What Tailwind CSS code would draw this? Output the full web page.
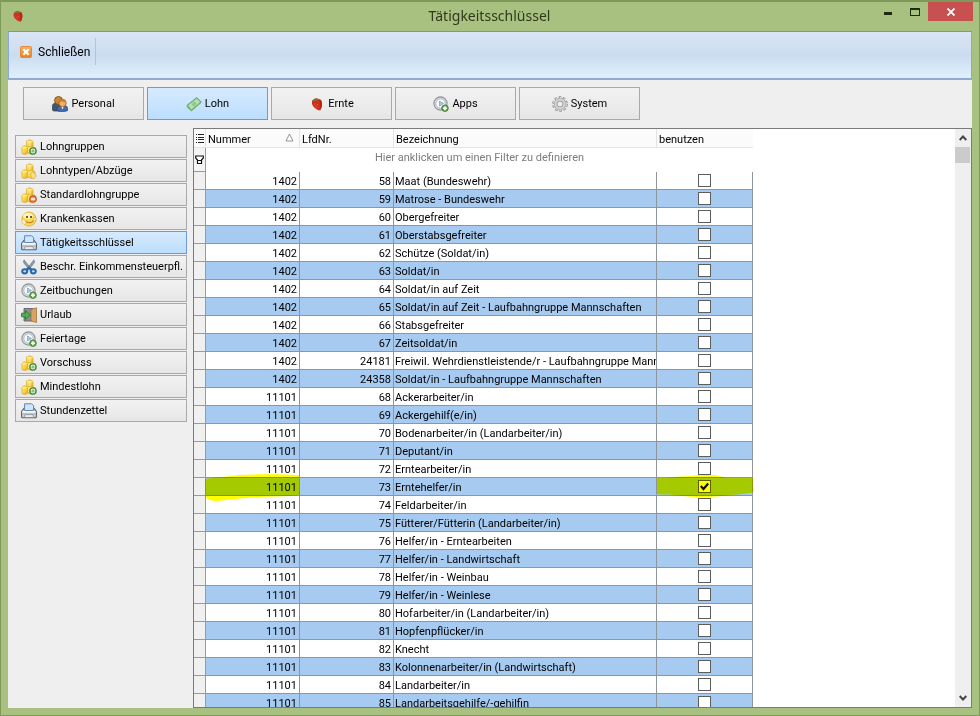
<!DOCTYPE html>
<html lang="de">
<head>
<meta charset="utf-8">
<meta name="viewport" content="width=device-width, initial-scale=1">
<title>Tätigkeitsschlüssel</title>
<script src="https://cdn.jsdelivr.net/npm/@tailwindcss/browser@4"></script>
</head>
<body class="h-screen overflow-hidden bg-[#a8c080] font-['Roboto',sans-serif] text-[11px] leading-4 text-black">

<svg class="absolute size-0" aria-hidden="true">
  <defs>
    <linearGradient id="gold" x1="0" y1="0" x2="1" y2="1"><stop offset="0" stop-color="#fff3a0"/><stop offset=".5" stop-color="#fbd548"/><stop offset="1" stop-color="#e5a91c"/></linearGradient>
    <linearGradient id="orange" x1="0" y1="0" x2="0" y2="1"><stop offset="0" stop-color="#f6b467"/><stop offset="1" stop-color="#ee7f1d"/></linearGradient>
    <symbol id="berry" viewBox="0 0 16 16">
      <path d="M3 5C5 3 9 2.500 12 4c1.700 3 1.200 7.500-1 10.500C7.500 14 4 11 3 8z" fill="#d02f1c"/>
      <path d="M11 14.500c2.200-3 2.700-7.500 1-10.500l-2-.5c1 3.500 1.200 7.500 1 11z" fill="#b02816"/>
      <path d="M3 5l1.500-1.800L7 2l2.500.8 2 .7-1.500 1-2-.2-1.500.8L5 5z" fill="#8a6a3c"/>
      <path d="M5 8h1M7 11h1M8 8.500h1M6 9.800h.8" stroke="#f08064" stroke-width=".6"/>
    </symbol>
    <symbol id="close-box" viewBox="0 0 12 12">
      <rect x=".5" y=".5" width="11" height="11" rx="1" fill="url(#orange)" stroke="#e38a3a"/>
      <path d="M3.300 3.300l5.400 5.400M8.700 3.300l-5.400 5.400" stroke="#fff" stroke-width="2.200"/>
    </symbol>
    <symbol id="people" viewBox="0 0 16 16">
      <path d="M.5 14V10c0-2 1.500-3 3.500-3h4v8H1.500z" fill="#44576f" stroke="#2b3a4c" stroke-width=".7"/>
      <circle cx="6.500" cy="4.500" r="4" fill="#c98930" stroke="#744615" stroke-width=".8"/>
      <path d="M5 14.500v-2c0-1.800 1.500-2.500 3-2.500h5c1.800 0 2.700.8 2.700 2.500v2c-2 1.400-8.700 1.400-10.700 0z" fill="#3f6cb3" stroke="#213f73" stroke-width=".7"/>
      <path d="M9 10l1.500 3.500L12 10z" fill="#fff"/>
      <circle cx="10.500" cy="7" r="3.700" fill="#f3b06c" stroke="#9b551c" stroke-width=".8"/>
      <path d="M7 6.500c.5-3.500 6-4 7 0-2-.2-3.600-.6-4.500-1.300-.4.800-1.400 1.200-2.500 1.300z" fill="#dd7a24"/>
    </symbol>
    <symbol id="money" viewBox="0 0 16 16">
      <path d="M.8 9.500L10.800 1.500l4.500 4.500L5.300 14.500z" fill="#8cc78b" stroke="#5f9f66" stroke-width=".9"/>
      <path d="M2.500 9.500l8.200-6.500 3 3-8.200 7z" fill="#b8e0b2"/>
      <ellipse cx="8.100" cy="8" rx="2.300" ry="1.800" transform="rotate(-38 8.100 8)" fill="#8cc98c"/>
      <path d="M.8 9.700l.2 1.800 4.300 4 10-8.500V6l-10 8.500z" fill="#7ab67c"/>
    </symbol>
    <symbol id="clock" viewBox="0 0 16 16">
      <circle cx="7.500" cy="7.500" r="6.600" fill="#dfe3e6" stroke="#8c9296" stroke-width="1.100"/>
      <circle cx="7.500" cy="7.500" r="4.700" fill="#fafcff" stroke="#9aa4ad" stroke-width=".8"/>
      <path d="M6.500 5v5l4-2.500z" fill="#a8c8e8" stroke="#668fb5" stroke-width=".6"/>
      <circle cx="12" cy="12.200" r="3.300" fill="#6aa84f" stroke="#3a7a28" stroke-width=".8"/>
      <path d="M12 10.200v4M10 12.200h4" stroke="#fff" stroke-width="1.500"/>
    </symbol>
    <symbol id="gear" viewBox="0 0 16 16">
      <circle cx="8" cy="8" r="6.500" fill="none" stroke="#8d8d8d" stroke-width="2.600" stroke-dasharray="2.500 1.580"/>
      <circle cx="8" cy="8" r="4.300" fill="none" stroke="#979797" stroke-width="3.600"/>
      <circle cx="8" cy="8" r="4.400" fill="none" stroke="#d2d2d2" stroke-width="2.200"/>
      <circle cx="8" cy="8" r="6.400" fill="none" stroke="#d2d2d2" stroke-width="1.600" stroke-dasharray="1.700 2.380" stroke-dashoffset="-.4"/>
    </symbol>
    <symbol id="coins" viewBox="0 0 16 16">
      <path d="M5.500 2l3-1.200L12 2v6H5.500z" fill="url(#gold)" stroke="#d8a82a" stroke-width=".7"/>
      <path d="M1 8l2.500-1.300L6.500 8v6.500L4 15.500l-3-1z" fill="url(#gold)" stroke="#d8a82a" stroke-width=".7"/>
      <path d="M6.500 8.500l3-1.200 4.500 1.200v5.500l-4 1.200-3.500-1.200z" fill="url(#gold)" stroke="#d8a82a" stroke-width=".7"/>
      <path d="M5.500 2L9 3.200 12 2M9 3.200V7M1 8l3 1.200L6.500 8" fill="none" stroke="#fff6b8" stroke-width=".8"/>
    </symbol>
    <symbol id="coins-plus" viewBox="0 0 16 16">
      <use href="#coins"/><circle cx="12" cy="12" r="3.100" fill="#fff" stroke="#3f8a35" stroke-width="1.400"/>
      <path d="M12 10.300v3.400M10.300 12h3.400" stroke="#7fb86c" stroke-width="1.300"/>
    </symbol>
    <symbol id="coins-hand" viewBox="0 0 16 16">
      <use href="#coins"/><path d="M9.500 11l2-2.200 2 1.500 1.700 2.700-1.700 2.300h-3z" fill="#fbe08a" stroke="#e0a93c" stroke-width=".8"/>
    </symbol>
    <symbol id="coins-minus" viewBox="0 0 16 16">
      <use href="#coins"/><circle cx="12" cy="12" r="3.200" fill="#f3a05a" stroke="#cf4d14" stroke-width="1.200"/>
      <path d="M10 12h4" stroke="#fff" stroke-width="1.600"/>
    </symbol>
    <symbol id="smiley" viewBox="0 0 16 16">
      <circle cx="8" cy="8" r="7" fill="#fbd955" stroke="#dba62c" stroke-width=".8"/>
      <ellipse cx="7" cy="4.800" rx="5" ry="3" fill="#fff3b5"/>
      <path d="M6 5v2M10 5v2" stroke="#3a2c10" stroke-width="1.500"/>
      <path d="M5 10.500c2 2 6 1.500 7.500-1" fill="none" stroke="#c18516" stroke-width="1.200"/>
      <path d="M.8 9.500c0-1.200 2-1.300 3 0l1.500 2-1.800 2c-1.700-.5-2.700-2-2.700-4zM13 6l2.200 1.500-.8 2.500-2-1z" fill="#fff6cf" stroke="#dba62c" stroke-width=".6"/>
    </symbol>
    <symbol id="printer" viewBox="0 0 16 16">
      <path d="M.6 8.500L3 5.300h10l2.400 3.200v5.300c0 .6-.4 1-1 1H1.600c-.6 0-1-.4-1-1z" fill="#d4d8dd" stroke="#59616b" stroke-width="1.100"/>
      <path d="M3.600 7.500V.8h7l2 1.700v5z" fill="#cfe6fa" stroke="#6087b0" stroke-width="1"/>
      <path d="M1.300 8.800h13.400" stroke="#f9fafb" stroke-width="1.600"/>
      <path d="M1.200 11h13.600" stroke="#9aa1aa" stroke-width=".8"/>
      <path d="M3 14.300l1-2.500h8l1 2.500z" fill="#fff" stroke="#6f7781" stroke-width=".7"/>
    </symbol>
    <symbol id="scissors" viewBox="0 0 16 16">
      <path d="M3 .8l7.500 9.500-2 .8L2.500 3.500zM13 .8L5.500 10.300l2 .8L13.500 3.500z" fill="#8e9dad" stroke="#5f6e7e" stroke-width=".6"/>
      <ellipse cx="3.700" cy="12.300" rx="2.500" ry="2.100" fill="#c6dcf2" stroke="#2968ad" stroke-width="2"/>
      <ellipse cx="12.300" cy="12.300" rx="2.500" ry="2.100" fill="#c6dcf2" stroke="#2968ad" stroke-width="2"/>
      <path d="M5.500 10.800L8 8.500l2.500 2.300" fill="none" stroke="#2968ad" stroke-width="2"/>
    </symbol>
    <symbol id="door" viewBox="0 0 16 16">
      <path d="M3 1.500h9V14H3z" fill="#8b8f93" stroke="#55585c" stroke-width=".8"/>
      <path d="M10 2.500L15.500.8v14.700L10 14z" fill="#d9a463" stroke="#9b6a30" stroke-width=".7"/>
      <path d="M.5 6.200h4V3.500L9.500 8l-5 4.500V9.800h-4z" fill="#4fae4f" stroke="#237a2b" stroke-width=".8"/>
    </symbol>
  </defs>
</svg>

<div class="flex h-full flex-col border-t-2 border-r border-b border-l border-[#7f9a58] px-[7px] pb-[7px]">

  <header class="relative -mr-[7px] flex h-[29px] shrink-0 items-start justify-end">
    <svg class="absolute top-[7px] left-[3px] size-[14px]"><use href="#berry"/></svg>
    <h1 class="absolute top-1 right-2 left-0 text-center font-['Noto_Sans',sans-serif] text-[14px] leading-5 text-[#2e3a1c]">Tätigkeitsschlüssel</h1>
    <button aria-label="Minimieren" class="relative flex h-[19px] w-[27px] items-center justify-center"><span class="mt-1 h-[3px] w-2 bg-[#1f2a10]"></span></button>
    <button aria-label="Maximieren" class="relative flex h-[19px] w-[27px] items-center justify-center"><span class="h-2 w-[10px] border border-t-2 border-[#1f2a10]"></span></button>
    <button aria-label="Fenster schließen" class="relative mr-[6px] flex h-[19px] w-[45px] items-center justify-center bg-[#c75050]">
      <svg class="size-2" viewBox="0 0 8 8"><path d="M.5.5l7 7M7.500.5l-7 7" stroke="#fff" stroke-width="1.800"/></svg>
    </button>
  </header>

  <main class="flex min-h-0 flex-1 flex-col bg-[#efefef]">
    <div class="flex h-[49px] shrink-0 items-start border border-b-2 border-t-[#7b9a8c] border-x-[#8ca9d2] border-b-[#8faad4] bg-linear-to-b from-[#dae5f5] via-[#ccdcf0] via-50% to-[#def0fc] pt-[6px]">
      <button class="flex h-[27px] items-center gap-[6px] border-r border-[#b2c4dc] pr-[5px] pl-[11px] text-[12px]">
        <svg class="size-3"><use href="#close-box"/></svg>Schließen
      </button>
    </div>

    <nav id="tabs" aria-label="Bereiche" class="flex shrink-0 gap-[3px] pt-[7px] pb-2 pl-[15px]"></nav>

    <div class="flex min-h-0 flex-1 gap-[6px] pl-[7px]">
      <nav id="menu" aria-label="Lohn" class="flex w-[172px] shrink-0 flex-col gap-px pt-[7px]"></nav>

      <section class="flex min-w-0 flex-1 overflow-hidden border border-[#7a7a7a] bg-white">
        <div class="min-w-0 flex-1 overflow-hidden">
          <table class="w-[559px] table-fixed border-separate border-spacing-0">
            <colgroup><col class="w-[12px]"><col class="w-[94px]"><col class="w-[94px]"><col class="w-[263px]"><col class="w-[96px]"></colgroup>
            <thead>
              <tr class="h-[19px] bg-[#fbfbfb] text-left leading-[15px]">
                <th class="border-r border-b border-[#e4e4e4] p-0">
                  <svg class="mx-auto size-[9px]" viewBox="0 0 9 9" shape-rendering="crispEdges"><path d="M3 .5h6M3 3.500h6M3 5.500h6M3 8.500h6" stroke="#222"/><path d="M1 .5h1M1 3.500h1M1 5.500h1M1 8.500h1" stroke="#222"/></svg>
                </th>
                <th class="border-r border-b border-[#e4e4e4] pt-[3px] pr-[5px] pb-0 pl-[2px] font-normal">
                  <span class="flex items-center justify-between">Nummer<svg class="mb-1 size-[9px]" viewBox="0 0 9 9"><path d="M4.500 1L8 8H1z" fill="#fff" stroke="#888" stroke-width=".9"/></svg></span>
                </th>
                <th class="border-r border-b border-[#e4e4e4] px-[2px] pt-[3px] pb-0 font-normal">LfdNr.</th>
                <th class="border-r border-b border-[#e4e4e4] px-[2px] pt-[3px] pb-0 font-normal">Bezeichnung</th>
                <th class="border-b border-[#e4e4e4] px-[2px] pt-[3px] pb-0 font-normal">benutzen</th>
              </tr>
              <tr class="h-6">
                <td class="border-r border-b border-[#9a9a9a] bg-[#f4f4f4] p-0">
                  <svg class="mx-auto size-[9px]" viewBox="0 0 9 9"><path d="M.7 1h7.600v2L6.500 5v3.500h-4V5L.7 3zM2.500 5.500h4" fill="#fff" stroke="#111" stroke-width="1.200"/></svg>
                </td>
                <td colspan="4" class="p-0 pb-1 text-center align-middle text-[#7c7c7c]">Hier anklicken um einen Filter zu definieren</td>
              </tr>
            </thead>
            <tbody id="rows"></tbody>
          </table>
        </div>
        <div class="flex w-4 shrink-0 flex-col items-center justify-between bg-[#efefef]">
          <div class="flex w-full flex-col">
            <button aria-label="Nach oben" class="flex h-[18px] items-center justify-center"><svg class="size-2" viewBox="0 0 8 8"><path d="M.7 6L4 2.500 7.300 6" fill="none" stroke="#444" stroke-width="1.900"/></svg></button>
            <div class="h-4 w-[15px] bg-[#cbcbcb]"></div>
          </div>
          <button aria-label="Nach unten" class="flex h-[18px] items-center justify-center"><svg class="size-2" viewBox="0 0 8 8"><path d="M.7 2L4 5.500 7.300 2" fill="none" stroke="#444" stroke-width="1.900"/></svg></button>
        </div>
      </section>
    </div>
  </main>
</div>

<script>
const icon = name => `<svg class="size-4 shrink-0"><use href="#${name}"/></svg>`;
const idle = 'border-[#a9a9a9] bg-linear-to-b from-[#f2f2f2] to-[#e6e6e6]';
const active = 'border-[#6d9bd6] bg-linear-to-b from-[#d6eafe] to-[#bcdefd]';

document.getElementById('tabs').innerHTML = [
  ['Personal', 'people'], ['Lohn', 'money'], ['Ernte', 'berry'], ['Apps', 'clock'], ['System', 'gear']
].map(([t, i]) => `<button class="flex h-[33px] w-[121px] items-center justify-center gap-[3px] border ${t === 'Lohn' ? active : idle}">${icon(i)}${t}</button>`).join('');

document.getElementById('menu').innerHTML = [
  ['Lohngruppen', 'coins-plus'], ['Lohntypen/Abzüge', 'coins-hand'], ['Standardlohngruppe', 'coins-minus'],
  ['Krankenkassen', 'smiley'], ['Tätigkeitsschlüssel', 'printer'], ['Beschr. Einkommensteuerpfl.', 'scissors'],
  ['Zeitbuchungen', 'clock'], ['Urlaub', 'door'], ['Feiertage', 'clock'], ['Vorschuss', 'coins-plus'],
  ['Mindestlohn', 'coins-plus'], ['Stundenzettel', 'printer']
].map(([t, i]) => `<button class="flex h-[23px] items-center gap-[3px] border pl-[5px] whitespace-nowrap ${t === 'Tätigkeitsschlüssel' ? active : idle}">${icon(i)}${t}</button>`).join('');

const data = [
  [1402, 58, 'Maat (Bundeswehr)'], [1402, 59, 'Matrose - Bundeswehr'], [1402, 60, 'Obergefreiter'],
  [1402, 61, 'Oberstabsgefreiter'], [1402, 62, 'Schütze (Soldat/in)'], [1402, 63, 'Soldat/in'],
  [1402, 64, 'Soldat/in auf Zeit'], [1402, 65, 'Soldat/in auf Zeit - Laufbahngruppe Mannschaften'],
  [1402, 66, 'Stabsgefreiter'], [1402, 67, 'Zeitsoldat/in'],
  [1402, 24181, 'Freiwil. Wehrdienstleistende/r - Laufbahngruppe Mann'],
  [1402, 24358, 'Soldat/in - Laufbahngruppe Mannschaften'],
  [11101, 68, 'Ackerarbeiter/in'], [11101, 69, 'Ackergehilf(e/in)'], [11101, 70, 'Bodenarbeiter/in (Landarbeiter/in)'],
  [11101, 71, 'Deputant/in'], [11101, 72, 'Erntearbeiter/in'], [11101, 73, 'Erntehelfer/in'],
  [11101, 74, 'Feldarbeiter/in'], [11101, 75, 'Fütterer/Fütterin (Landarbeiter/in)'],
  [11101, 76, 'Helfer/in - Erntearbeiten'], [11101, 77, 'Helfer/in - Landwirtschaft'],
  [11101, 78, 'Helfer/in - Weinbau'], [11101, 79, 'Helfer/in - Weinlese'],
  [11101, 80, 'Hofarbeiter/in (Landarbeiter/in)'], [11101, 81, 'Hopfenpflücker/in'], [11101, 82, 'Knecht'],
  [11101, 83, 'Kolonnenarbeiter/in (Landwirtschaft)'], [11101, 84, 'Landarbeiter/in'],
  [11101, 85, 'Landarbeitsgehilfe/-gehilfin']
];
const markLeft = '<svg class="pointer-events-none absolute -top-[4px] -left-px h-[27px] w-[95px] mix-blend-multiply" viewBox="0 0 95 27"><path d="M0 5C10 3 22 3 33 1c20-1 42-1 61 0l1 20c-18 2-34 1-52 3-12 0-22 3-34 3-5-1-8-2-9-6z" fill="#ff0"/></svg>';
const markRight = '<svg class="pointer-events-none absolute -top-[4px] left-0 h-[25px] w-[97px] mix-blend-multiply" viewBox="0 0 97 25"><path d="M0 4h10C18 2 30 3 42 1h16c4 1 8 2 12 3h26l1 14c-10 3-22 2-32 4-16 2-34 1-48-1-6-1-12 0-17-1z" fill="#ff0"/></svg>';
const tick = '<svg class="pointer-events-none absolute top-[4px] left-[43px] size-[9px]" viewBox="0 0 9 9"><path d="M.8 4L3.500 7 8.200 1.500" fill="none" stroke="#111" stroke-width="2.200"/></svg>';

document.getElementById('rows').innerHTML = data.map(([n, l, t], i) => {
  const on = l === 73;
  return `<tr class="h-[18px] leading-[15px] ${i % 2 ? 'bg-[#a6caf0]' : 'bg-white'}">
    <td class="border-r border-b border-[#9a9a9a] bg-[#f0f0f0] p-0"></td>
    <td class="relative border-r border-b border-[#8e959c] px-[2px] pt-[2px] pb-0 text-right">${n}${on ? markLeft : ''}</td>
    <td class="border-r border-b border-[#8e959c] px-[2px] pt-[2px] pb-0 text-right">${l}</td>
    <td class="overflow-hidden border-r border-b border-[#8e959c] px-px pt-[2px] pb-0 whitespace-nowrap">${t}</td>
    <td class="relative border-r border-b border-[#8e959c] p-0"><input type="checkbox" aria-label="${t} benutzen" ${on ? 'checked' : ''} class="mx-auto block size-[13px] appearance-none border border-[#5c5c5c] bg-white">${on ? tick + markRight : ''}</td>
  </tr>`;
}).join('');
</script>
</body>
</html>
